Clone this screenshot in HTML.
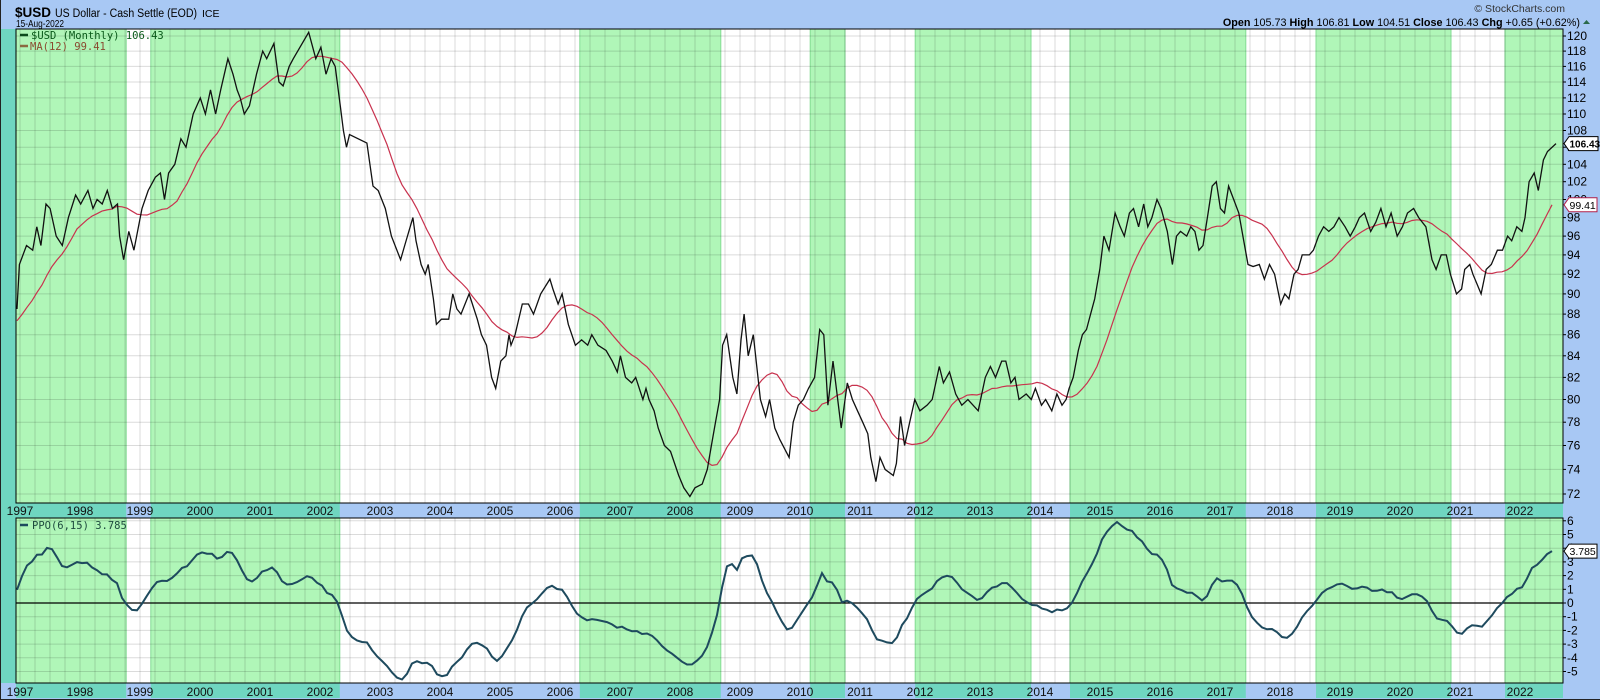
<!DOCTYPE html>
<html><head><meta charset="utf-8"><style>
html,body{margin:0;padding:0;background:#a8c8f4;width:1600px;height:700px;overflow:hidden}
svg{display:block}
text{font-family:"Liberation Sans",Arial,sans-serif}
</style></head><body>
<svg id="c" width="1600" height="700" xmlns="http://www.w3.org/2000/svg"></svg>
<script>
var S=document.getElementById('c');var h='';
var L=16,R=1563,T=29,MB=503,PT=518,PB=683;
function X(t){return 140+(t-1999)*60;}
function Y(p){return 36+896.6*Math.log(120/p);}
function PY(v){return 603-13.7*v;}
h+='<rect width="1600" height="700" fill="#a8c8f4"/>';
h+='<rect x="0" y="29" width="16" height="654" fill="#6fd6c0"/>';
h+='<rect x="'+L+'" y="'+T+'" width="'+(R-L)+'" height="'+(MB-T)+'" fill="#fff"/>';
h+='<rect x="'+L+'" y="'+PT+'" width="'+(R-L)+'" height="'+(PB-PT)+'" fill="#fff"/>';
var bands=[[1996.9,1998.77],[1999.18,2002.33],[2006.33,2008.68],[2010.17,2010.75],[2011.92,2013.85],[2014.5,2017.43],[2018.6,2020.85],[2021.75,2022.72]];
bands.forEach(function(b){var x1=Math.max(L,X(b[0])),x2=Math.min(R,X(b[1]));
 h+='<rect x="'+x1+'" y="'+T+'" width="'+(x2-x1)+'" height="'+(MB-T)+'" fill="#b0f6b8" stroke="#84dc94" stroke-width="1"/>';
 h+='<rect x="'+x1+'" y="'+PT+'" width="'+(x2-x1)+'" height="'+(PB-PT)+'" fill="#b0f6b8" stroke="#84dc94" stroke-width="1"/>';
 h+='<rect x="'+x1+'" y="'+MB+'" width="'+(x2-x1)+'" height="'+(PT-MB)+'" fill="#6fd6c0"/>';
 h+='<rect x="'+x1+'" y="'+PB+'" width="'+(x2-x1)+'" height="15" fill="#6fd6c0"/>';
});
for(var t=1997;t<2022.8;t+=0.25){var x=X(t).toFixed(1);if(x<L||x>R)continue;
 h+='<line x1="'+x+'" y1="'+T+'" x2="'+x+'" y2="'+MB+'" stroke="rgba(0,0,0,0.14)"/>';
 h+='<line x1="'+x+'" y1="'+PT+'" x2="'+x+'" y2="'+PB+'" stroke="rgba(0,0,0,0.14)"/>';}
for(var p=72;p<=120;p+=2){var y=Y(p).toFixed(1);
 h+='<line x1="'+L+'" y1="'+y+'" x2="'+R+'" y2="'+y+'" stroke="rgba(0,0,0,0.14)"/>';
 h+='<line x1="'+R+'" y1="'+y+'" x2="'+(R+3)+'" y2="'+y+'" stroke="#000"/>';
 h+='<text x="'+(R+4)+'" y="'+(+y+4)+'" font-size="12" fill="#000">'+p+'</text>';}
for(var v=-5;v<=6;v++){var y=PY(v).toFixed(1);
 h+='<line x1="'+L+'" y1="'+y+'" x2="'+R+'" y2="'+y+'" stroke="rgba(0,0,0,0.14)"/>';
 h+='<line x1="'+R+'" y1="'+y+'" x2="'+(R+3)+'" y2="'+y+'" stroke="#000"/>';
 h+='<text x="'+(R+4)+'" y="'+(+y+4)+'" font-size="12" fill="#000">'+v+'</text>';}
for(var yr=1997;yr<=2022;yr++){var x=X(yr);
 h+='<text x="'+x+'" y="'+(MB+12)+'" font-size="12" text-anchor="middle" fill="#111">'+yr+'</text>';
 h+='<text x="'+x+'" y="'+(PB+13)+'" font-size="12" text-anchor="middle" fill="#111">'+yr+'</text>';}
var d=[15,88.5,20,93,27,95,33,94.5,37,97,41,95,46,99.5,50,99,56,96,62,95,68,98,75,100.5,80,99.5,87,101,92,99,96,100,101,99.5,106,101,111,99,116,99.5,118,96,122,93.5,127,96.5,132,94.5,140,99,146,101,153,102.5,158,103,162,100,166,103,172,104,178,107,183,106,190,110,197,112,202,110,207,113,212,110,217,113,224,117,229,115,233,113,236,112,240,110,245,111,252,115,258,118,262,117,269,119,274,114,278,113.5,284,116,288,117,303,120.5,310,117,315,118.5,320,115,325,117,329,116,334,111,337,108,340,106,343,107.5,360,106.5,366,101.5,371,101,378,99,384,96,393,93.5,397,95,405,98,408,95.5,413,93,417,92,420,93,425,89.5,428,87,433,87.5,440,87.5,444,90,448,88.5,452,88,460,90,468,87.5,472,86,477,85,482,82,486,81,491,83.5,496,84,499,86,501,85,505,86,512,89,518,89,523,88,530,90,539,91.5,542,90.5,547,89,551,90,557,87,564,85,570,85.5,576,85,580,86,586,85,594,84.5,600,83.5,605,82.5,608,84,613,82,619,81.5,623,82,630,80,633,81,636,80,641,79,645,77.5,651,76,657,75.5,665,73.5,670,72.5,676,71.8,681,72.5,688,72.8,693,74,697,76,701,78,705,80,708,85,712,86,718,82,722,80.5,726,85.5,729,88,733,84,738,86,745,80,750,78.5,754,80,759,77.5,764,76.5,773,75,777,78,782,79.5,787,80,792,81,798,82,803,86.5,807,86,811,79.5,816,83.5,824,77.5,830,81.5,835,80,840,79,845,78,850,77,853,75,858,73,862,75,867,74,875,73.5,878,74.5,882,78.5,886,76,891,78,896,80,901,79,908,79.5,913,80,920,83,924,81.5,930,82.5,936,80.5,942,79.5,948,80,958,79,965,82,970,83,975,82,981,83.5,985,83.5,990,81.5,994,82,998,80,1005,80.5,1010,80,1014,81,1020,79.5,1024,80,1030,79,1035,80.5,1040,79.5,1044,80,1047,81,1051,82,1056,84.5,1060,86,1064,86.5,1068,88,1072,89.5,1077,92.5,1081,96,1086,94.5,1092,98.5,1097,97,1101,96,1106,98.5,1110,99,1115,97,1120,99.5,1124,97,1128,98,1133,100,1137,99,1143,96.5,1148,93,1152,96,1156,96.5,1162,96,1166,97,1170,96.5,1174,94.5,1178,95,1183,98.5,1187,101.5,1191,102,1195,99,1199,98.5,1203,101.5,1208,100,1213,98.5,1217,96,1222,93,1227,92.8,1233,93,1238,91.5,1243,93,1248,92,1254,89,1258,90,1262,89.5,1267,92,1271,92.5,1275,94,1282,94,1286,94.5,1291,96,1296,97,1301,96.5,1306,97,1311,98,1317,97,1322,96,1327,97,1331,98,1336,98.5,1342,96.5,1347,97.5,1352,99,1357,97,1362,98.5,1368,96,1373,97,1378,98.5,1384,99,1389,98,1396,97,1402,93.5,1406,92.5,1411,94,1416,94,1420,92,1426,90,1431,90.5,1434,92.5,1439,93,1442,92,1446,91,1450,90,1455,92.5,1460,93,1466,94.5,1471,94.5,1476,96,1480,95.5,1485,97,1490,96.5,1493,98,1497,102,1502,103,1506,101,1511,104.5,1515,105.5,1523,106.43];
var tt=[],pp=[];for(var i=0;i<d.length;i+=2){tt.push(1999+(d[i]-138)/58.7);pp.push(d[i+1]);}
tt[0]=1996.95;tt[tt.length-1]=2022.6;
var pts=[];for(var i=0;i<tt.length;i++)pts.push(X(tt[i]).toFixed(1)+','+Y(pp[i]).toFixed(1));
function interp(t){if(t<=tt[0])return pp[0];for(var i=1;i<tt.length;i++)if(t<=tt[i]){var f=(t-tt[i-1])/(tt[i]-tt[i-1]);return pp[i-1]+f*(pp[i]-pp[i-1]);}return pp[pp.length-1];}
var mt=[],mp=[];for(var t=1996.95;t<=2022.601;t+=1/12){mt.push(t);mp.push(interp(t));}
var pre=[];for(var k=24;k>0;k--)pre.push(84+ (24-k)*0.18);
var all=pre.concat(mp);
var ma=[];for(var i=0;i<mp.length;i++){var s=0;for(var j=0;j<12;j++)s+=all[pre.length+i-j];ma.push(s/12);}
var e6=all[0],e15=all[0],a6=2/7,a15=2/16,ppo=[];
for(var i=0;i<all.length;i++){e6=e6+a6*(all[i]-e6);e15=e15+a15*(all[i]-e15);if(i>=pre.length)ppo.push((e6-e15)/e15*100);}
var sc=3.785/ppo[ppo.length-1];
var mpts=[],ppts=[];for(var i=0;i<mt.length;i++){mpts.push(X(mt[i]).toFixed(1)+','+Y(ma[i]).toFixed(1));ppts.push(X(mt[i]).toFixed(1)+','+PY(ppo[i]*sc).toFixed(1));}
h+='<line x1="'+L+'" y1="603" x2="'+R+'" y2="603" stroke="#000" stroke-width="1.2"/>';
h+='<polyline points="'+mpts.join(' ')+'" fill="none" stroke="#c8324e" stroke-width="1.2"/>';
h+='<polyline points="'+pts.join(' ')+'" fill="none" stroke="#111" stroke-width="1.3"/>';
h+='<polyline points="'+ppts.join(' ')+'" fill="none" stroke="#1e4a5e" stroke-width="2"/>';
h+='<rect x="'+L+'" y="'+T+'" width="'+(R-L)+'" height="'+(MB-T)+'" fill="none" stroke="#000"/>';
h+='<rect x="'+L+'" y="'+PT+'" width="'+(R-L)+'" height="'+(PB-PT)+'" fill="none" stroke="#000"/>';
h+='<line x1="'+L+'" y1="'+MB+'" x2="'+R+'" y2="'+MB+'" stroke="#000" stroke-dasharray="1,1"/>';
h+='<line x1="0" y1="699.5" x2="1600" y2="699.5" stroke="#222"/>';
h+='<line x1="0.5" y1="0" x2="0.5" y2="700" stroke="#222"/>';
function tag(y,txt,col,bold,w,fs){h+='<path d="M'+(R+1)+','+y+' l5,-7 h'+w+' v14 h-'+w+' z" fill="#fff" stroke="'+col+'"/>';
 h+='<text x="'+(R+6.5)+'" y="'+(y+4)+'" font-size="'+fs+'" '+(bold?'font-weight="bold"':'')+' fill="#000">'+txt+'</text>';}
tag(Y(99.41),'99.41','#b0204a',false,28,10.5);tag(Y(106.43),'106.43','#000',true,29,10);tag(PY(3.785),'3.785','#000',false,28,10.5);
h+='<text x="15" y="17" font-size="13.5" font-weight="bold" fill="#000">$USD</text>';
h+='<text x="55" y="17" font-size="11.5" fill="#000" textLength="142" lengthAdjust="spacingAndGlyphs">US Dollar - Cash Settle (EOD)</text>';
h+='<text x="202" y="17" font-size="10.5" fill="#000">ICE</text>';
h+='<text x="16" y="27" font-size="10" fill="#000" textLength="48" lengthAdjust="spacingAndGlyphs">15-Aug-2022</text>';
h+='<text x="1565" y="12" font-size="10.5" fill="#333" text-anchor="end">© StockCharts.com</text>';
h+='<text x="1580" y="26" font-size="10.8" fill="#000" text-anchor="end"><tspan font-weight="bold">Open</tspan> 105.73 <tspan font-weight="bold">High</tspan> 106.81 <tspan font-weight="bold">Low</tspan> 104.51 <tspan font-weight="bold">Close</tspan> 106.43 <tspan font-weight="bold">Chg</tspan> +0.65 (+0.62%)</text>';
h+='<path d="M1583,24 l3.5,-4 l3.5,4 z" fill="#2a6a4a"/>';
h+='<line x1="20" y1="35" x2="28" y2="35" stroke="#0a4a1a" stroke-width="2.5"/>';
h+='<text x="31" y="39" font-size="10.5" fill="#0a5a1a" style="font-family:DejaVu Sans Mono,monospace">$USD (Monthly) 106.43</text>';
h+='<line x1="20" y1="46" x2="28" y2="46" stroke="#8a6a40" stroke-width="2.5"/>';
h+='<text x="30" y="50" font-size="10.5" fill="#8a4a30" style="font-family:DejaVu Sans Mono,monospace">MA(12) 99.41</text>';
h+='<line x1="20" y1="525" x2="28" y2="525" stroke="#1e4a5e" stroke-width="2.5"/>';
h+='<text x="32" y="529" font-size="10.5" fill="#1e4a3e" style="font-family:DejaVu Sans Mono,monospace">PPO(6,15) 3.785</text>';
S.innerHTML=h;
</script>
</body></html>
